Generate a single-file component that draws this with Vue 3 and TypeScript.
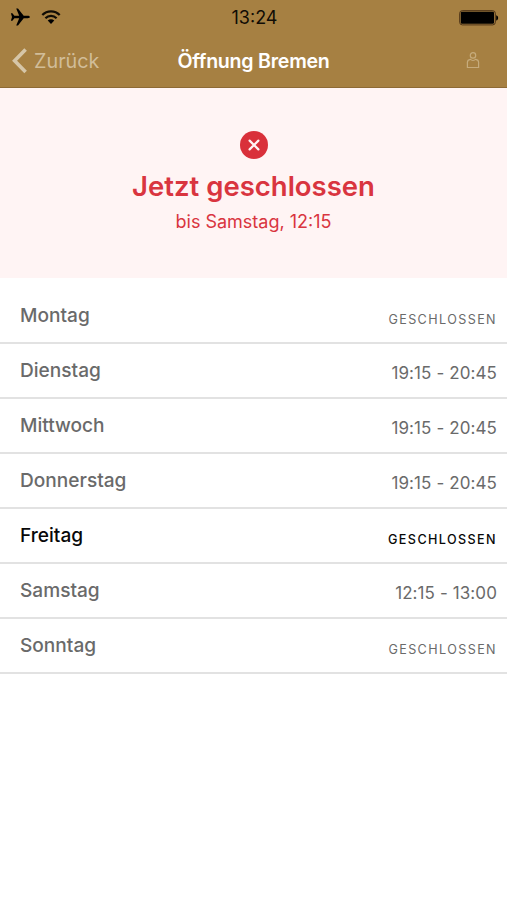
<script setup lang="ts">
interface OpeningDay {
  name: string
  hours: string | null
  today?: boolean
}

const days: OpeningDay[] = [
  { name: 'Montag', hours: null },
  { name: 'Dienstag', hours: '19:15 - 20:45' },
  { name: 'Mittwoch', hours: '19:15 - 20:45' },
  { name: 'Donnerstag', hours: '19:15 - 20:45' },
  { name: 'Freitag', hours: null, today: true },
  { name: 'Samstag', hours: '12:15 - 13:00' },
  { name: 'Sonntag', hours: null },
]
</script>

<template>
  <div class="screen">
    <header class="header">
      <div class="status-bar">
        <div class="signals">
          <svg class="plane" width="20" height="18" viewBox="0 0 20 18" aria-hidden="true">
            <path d="M19.8 9c0-.8-.9-1.2-2-1.2h-4.1L8 .6H6.2l3 7.2H4.4L2.4 5.3H.9L2 9 .9 12.7h1.5l2-2.5h4.8l-3 7.2H8l5.7-7.2h4.1c1.1 0 2-.4 2-1.2z" />
          </svg>
          <svg class="wifi" width="20" height="15" viewBox="0 0 20 15" aria-hidden="true">
            <path class="wave" d="M1.3 5C6 .1 14 .1 18.7 5M4.4 8.2c3.1-3.2 8.1-3.2 11.2 0" />
            <path d="M6.7 10.6c1.9-1.8 4.7-1.8 6.6 0L10 14z" />
          </svg>
        </div>
        <span class="clock">13:24</span>
        <svg class="battery" width="40" height="16" viewBox="0 0 40 16" aria-hidden="true">
          <rect class="shell" x=".7" y=".7" width="35.6" height="14.2" rx="2.6" />
          <rect x="1.8" y="1.8" width="33.2" height="12" rx="1.2" />
          <path d="M37.2 5.2c2.6.7 2.6 4.6 0 5.3z" />
        </svg>
      </div>
      <nav class="nav-bar">
        <button class="back" type="button">
          <svg width="17" height="28" viewBox="0 0 17 28" aria-hidden="true">
            <path d="M14.6 2.5 3.6 13.8l11 11.3" />
          </svg>
          <span>Zurück</span>
        </button>
        <h1>Öffnung Bremen</h1>
        <button class="profile" type="button" aria-label="Profil">
          <svg width="14" height="18" viewBox="0 0 14 18" aria-hidden="true">
            <circle cx="7" cy="3.4" r="2.7" />
            <path d="M4.5 7.3C2.7 7.5 1.4 8.5 1.4 10.3v5.2h11.2v-5.2c0-1.8-1.3-2.8-3.1-3-1 1.6-4 1.6-5 0z" />
          </svg>
        </button>
      </nav>
    </header>

    <section class="notice">
      <svg width="28" height="28" viewBox="0 0 28 28" aria-hidden="true">
        <circle cx="14" cy="14" r="14" />
        <path d="m9.6 9.6 8.8 8.8m0-8.8-8.8 8.8" />
      </svg>
      <h2>Jetzt geschlossen</h2>
      <p>bis Samstag, 12:15</p>
    </section>

    <ul class="days">
      <li v-for="day in days" :key="day.name" :class="{ today: day.today }">
        <span class="name">{{ day.name }}</span>
        <span v-if="day.hours" class="hours">{{ day.hours }}</span>
        <span v-else class="closed">GESCHLOSSEN</span>
      </li>
    </ul>
  </div>
</template>

<style>
body {
  background: #fff;
}
</style>

<style scoped>
.screen {
  min-height: 900px;
  font-family: Inter, "Liberation Sans", sans-serif;
  color: #6a6a6a;
  background: #fff;
}

.header {
  box-sizing: border-box;
  height: 88px;
  background: #a68042;
  border-bottom: 1px solid #8d6a35;
}

.status-bar {
  display: grid;
  grid-template-columns: 1fr auto 1fr;
  align-items: center;
  height: 34px;
  padding: 0 8px 0 10px;
  color: #100c05;
}

.signals {
  display: flex;
  align-items: center;
  gap: 11px;
  padding-bottom: 1px;
}

.wave {
  fill: none;
  stroke: #100c05;
  stroke-width: 2.2;
}

.clock {
  padding-top: 1px;
  font-size: 18px;
  line-height: 34px;
}

.battery {
  justify-self: end;
}

.shell {
  fill: none;
  stroke: #4a3015;
}

.nav-bar {
  display: grid;
  grid-template-columns: 1fr auto 1fr;
  align-items: center;
  height: 53px;
  padding: 0 11px;
}

button {
  display: flex;
  align-items: center;
  padding: 0;
  border: 0;
  font: inherit;
  color: #d1bd99;
  background: none;
}

.back {
  gap: 6px;
  font-size: 19.8px;
}

.back path {
  fill: none;
  stroke: #d6c6a8;
  stroke-width: 3.6;
}

h1 {
  margin: 0;
  font-size: 19.6px;
  font-weight: 600;
  letter-spacing: -0.25px;
  color: #fff;
}

.profile {
  justify-self: end;
  margin-right: 16px;
}

.profile svg {
  fill: none;
  stroke: #c6ab7c;
  stroke-width: 1.2;
}

.notice {
  box-sizing: border-box;
  display: flex;
  flex-direction: column;
  align-items: center;
  height: 190px;
  padding-top: 43px;
  color: #d9353f;
  background: #fff4f4;
}

.notice circle {
  fill: #d9303a;
}

.notice path {
  fill: none;
  stroke: #fff4f4;
  stroke-width: 2.2;
  stroke-linecap: round;
}

h2 {
  margin: 9px 0 0;
  font-size: 27.5px;
  font-weight: 600;
  line-height: 36px;
}

.notice p {
  margin: 6px 0 0;
  font-size: 18px;
  line-height: 24px;
}

.days {
  margin: 0;
  padding: 11px 0 0;
  list-style: none;
}

.days li {
  box-sizing: border-box;
  display: flex;
  justify-content: space-between;
  height: 55px;
  padding: 0 10px 0 20px;
  border-bottom: 2px solid #e2e2e2;
}

.name {
  font-size: 19.1px;
  font-weight: 450;
  line-height: 53px;
}

.hours {
  font-size: 17px;
  line-height: 59px;
  letter-spacing: 0.1px;
}

.closed {
  font-size: 12.6px;
  line-height: 62px;
  letter-spacing: 1.4px;
}

.days .today {
  color: #080808;
}

.today .name {
  font-weight: 500;
}

.today .closed {
  font-weight: 450;
}
</style>
